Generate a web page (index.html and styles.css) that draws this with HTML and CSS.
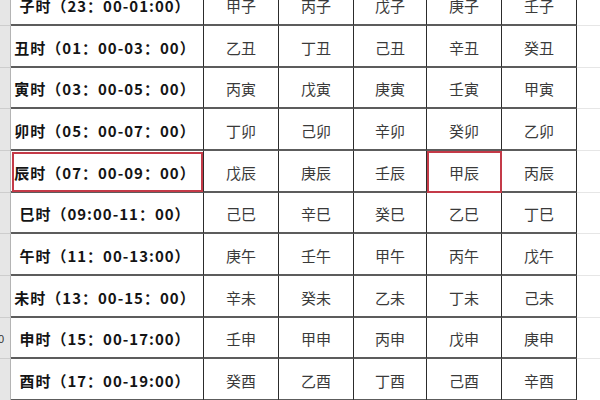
FILE: index.html
```html
<!DOCTYPE html>
<html lang="zh">
<head>
<meta charset="utf-8">
<title>时辰表</title>
<link rel="stylesheet" href="styles.css">
</head>
<body>
<div class="sheet">
  <div class="hdr"></div><div class="cell time">子时（23：00-01:00）</div><div class="cell">甲子</div><div class="cell">丙子</div><div class="cell">戊子</div><div class="cell">庚子</div><div class="cell">壬子</div><div class="blank"></div>
  <div class="hdr"></div><div class="cell time">丑时（01：00-03：00）</div><div class="cell">乙丑</div><div class="cell">丁丑</div><div class="cell">己丑</div><div class="cell">辛丑</div><div class="cell">癸丑</div><div class="blank"></div>
  <div class="hdr"></div><div class="cell time">寅时（03：00-05：00）</div><div class="cell">丙寅</div><div class="cell">戊寅</div><div class="cell">庚寅</div><div class="cell">壬寅</div><div class="cell">甲寅</div><div class="blank"></div>
  <div class="hdr"></div><div class="cell time">卯时（05：00-07：00）</div><div class="cell">丁卯</div><div class="cell">己卯</div><div class="cell">辛卯</div><div class="cell">癸卯</div><div class="cell">乙卯</div><div class="blank"></div>
  <div class="hdr"></div><div class="cell time mark-inset">辰时（07：00-09：00）</div><div class="cell">戊辰</div><div class="cell">庚辰</div><div class="cell">壬辰</div><div class="cell mark">甲辰</div><div class="cell">丙辰</div><div class="blank"></div>
  <div class="hdr"></div><div class="cell time">巳时（09:00-11：00）</div><div class="cell">己巳</div><div class="cell">辛巳</div><div class="cell">癸巳</div><div class="cell">乙巳</div><div class="cell">丁巳</div><div class="blank"></div>
  <div class="hdr"></div><div class="cell time">午时（11：00-13:00）</div><div class="cell">庚午</div><div class="cell">壬午</div><div class="cell">甲午</div><div class="cell">丙午</div><div class="cell">戊午</div><div class="blank"></div>
  <div class="hdr"></div><div class="cell time">未时（13：00-15：00）</div><div class="cell">辛未</div><div class="cell">癸未</div><div class="cell">乙未</div><div class="cell">丁未</div><div class="cell">己未</div><div class="blank"></div>
  <div class="hdr"><span class="rownum">10</span></div><div class="cell time">申时（15：00-17:00）</div><div class="cell">壬申</div><div class="cell">甲申</div><div class="cell">丙申</div><div class="cell">戊申</div><div class="cell">庚申</div><div class="blank"></div>
  <div class="hdr"></div><div class="cell time">酉时（17：00-19:00）</div><div class="cell">癸酉</div><div class="cell">乙酉</div><div class="cell">丁酉</div><div class="cell">己酉</div><div class="cell">辛酉</div><div class="blank"></div>
</div>
</body>
</html>
```
FILE: styles.css
```css
html, body {
  margin: 0;
  padding: 0;
  width: 600px;
  height: 400px;
  overflow: hidden;
  background: #ffffff;
}

.sheet {
  display: grid;
  grid-template-columns: 11px 193px 75px 75px 73px 75px 75px 1fr;
  grid-auto-rows: 41.667px;
  margin-top: -15.67px;
  font-family: "Noto Sans CJK SC", "Noto Sans", sans-serif;
}

.hdr {
  box-sizing: border-box;
  background: #e6e6e6;
  border-bottom: 1px solid #cdcdcd;
  border-right: 1px solid #b4b4b4;
  overflow: hidden;
  display: flex;
  align-items: center;
}

.rownum {
  font-family: "Liberation Sans", sans-serif;
  font-size: 11px;
  color: #333;
  margin-left: -8px;
  margin-top: 2px;
}

.cell {
  box-sizing: border-box;
  border-bottom: 2px solid #5c5c5c;
  border-right: 1px solid #2c2c2c;
  display: flex;
  align-items: center;
  justify-content: center;
  padding-top: 3px;
  font-size: 15px;
  color: #3a3a3a;
  white-space: nowrap;
}

.time {
  font-weight: 700;
  color: #141414;
  font-size: 15px;
  letter-spacing: 1px;
  padding-right: 4px;
}

.blank {
  box-sizing: border-box;
  border-bottom: 1px solid #e6e6e6;
}

.mark-inset {
  outline: 2px solid #c43a48;
  outline-offset: -3px;
}

.mark {
  outline: 2px solid #c43a48;
  outline-offset: -2px;
}
```
